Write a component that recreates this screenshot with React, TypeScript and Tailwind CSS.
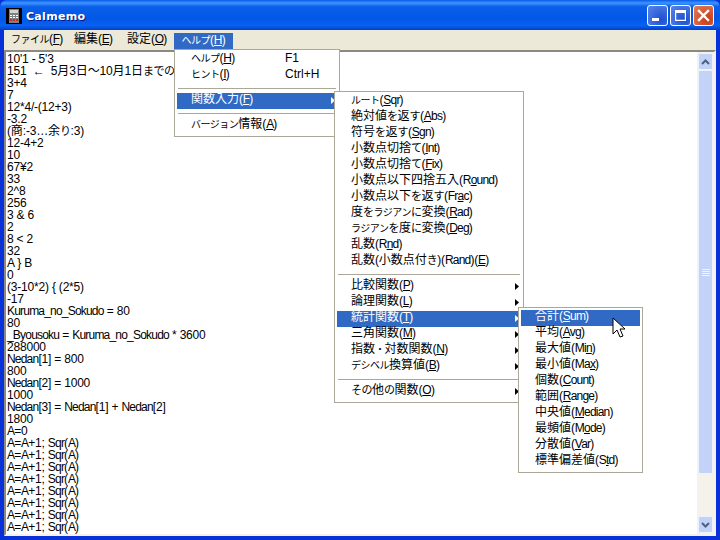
import React from "react";

const UI_FONT = "font-['Liberation_Sans','Noto_Sans_CJK_JP',sans-serif]";

const LINES = [
  "10'1 - 5'3",
  "151  ←  5月3日～10月1日までの",
  "3+4",
  "7",
  "12*4/-(12+3)",
  "-3.2",
  "(商:-3…余り:3)",
  "12-4+2",
  "10",
  "67¥2",
  "33",
  "2^8",
  "256",
  "3 & 6",
  "2",
  "8 < 2",
  "32",
  "A } B",
  "0",
  "(3-10*2) { (2*5)",
  "-17",
  "Kuruma_no_Sokudo = 80",
  "80",
  "_Byousoku = Kuruma_no_Sokudo * 3600",
  "288000",
  "Nedan[1] = 800",
  "800",
  "Nedan[2] = 1000",
  "1000",
  "Nedan[3] = Nedan[1] + Nedan[2]",
  "1800",
  "A=0",
  "A=A+1; Sqr(A)",
  "A=A+1; Sqr(A)",
  "A=A+1; Sqr(A)",
  "A=A+1; Sqr(A)",
  "A=A+1; Sqr(A)",
  "A=A+1; Sqr(A)",
  "A=A+1; Sqr(A)",
  "A=A+1; Sqr(A)",
];

type Entry =
  | { sep: true }
  | { label: string; key?: string; arrow?: boolean; active?: boolean };

const SEP: Entry = { sep: true };

const HELP_MENU: Entry[] = [
  { label: "ヘルプ(&H)", key: "F1" },
  { label: "ヒント(&I)", key: "Ctrl+H" },
  SEP,
  { label: "関数入力(&F)", arrow: true, active: true },
  SEP,
  { label: "バージョン情報(&A)" },
];

const FUNC_MENU: Entry[] = [
  { label: "ルート(&Sqr)" },
  { label: "絶対値を返す(&Abs)" },
  { label: "符号を返す(&Sgn)" },
  { label: "小数点切捨て(&Int)" },
  { label: "小数点切捨て(&Fix)" },
  { label: "小数点以下四捨五入(R&ound)" },
  { label: "小数点以下を返す(Fr&ac)" },
  { label: "度をラジアンに変換(&Rad)" },
  { label: "ラジアンを度に変換(&Deg)" },
  { label: "乱数(R&nd)" },
  { label: "乱数(小数点付き)(Rand)(&E)" },
  SEP,
  { label: "比較関数(&P)", arrow: true },
  { label: "論理関数(&L)", arrow: true },
  { label: "統計関数(&T)", arrow: true, active: true },
  { label: "三角関数(&M)", arrow: true },
  { label: "指数・対数関数(&N)", arrow: true },
  { label: "デシベル換算値(&B)", arrow: true },
  SEP,
  { label: "その他の関数(&O)", arrow: true },
];

const STAT_MENU: Entry[] = [
  { label: "合計(&Sum)", active: true },
  { label: "平均(&Avg)" },
  { label: "最大値(Mi&n)" },
  { label: "最小値(Ma&x)" },
  { label: "個数(&Count)" },
  { label: "範囲(&Range)" },
  { label: "中央値(&Median)" },
  { label: "最頻値(M&ode)" },
  { label: "分散値(&Var)" },
  { label: "標準偏差値(S&td)" },
];

// the bitmap UI font has narrow kana and latin, so squeeze those runs
function Squeezed({ text }: { text: string }) {
  const runs = text.match(/[ァ-ヿ]+|[ぁ-ゟ]+|[A-Za-z_]+|[一-龠]+|[^ァ-ヿぁ-ゟA-Za-z_一-龠]+/g) ?? [];
  return (
    <>
      {runs.map((run, i) => {
        let cls = "tracking-[-0.2px]";
        if (/[ァ-ヿ]/.test(run)) cls = "text-[10px] tracking-[-0.5px]";
        else if (/[ぁ-ゟ]/.test(run)) cls = "text-[11px] tracking-[-0.5px]";
        else if (/[A-Za-z_]/.test(run)) cls = "tracking-[-0.8px]";
        else if (/[一-龠]/.test(run)) cls = "";
        return (
          <span key={i} className={cls}>
            {run}
          </span>
        );
      })}
    </>
  );
}

function Mnemonic({ text }: { text: string }) {
  const i = text.indexOf("&");
  if (i < 0) return <Squeezed text={text} />;
  return (
    <>
      <Squeezed text={text.slice(0, i)} />
      <u>
        <Squeezed text={text[i + 1]} />
      </u>
      <Squeezed text={text.slice(i + 2)} />
    </>
  );
}

function MenuPanel({ items, className }: { items: Entry[]; className: string }) {
  return (
    <div
      className={`absolute flex flex-col border border-[#aca899] bg-white px-[2px] py-[2px] text-[12px] text-black ${UI_FONT} ${className}`}
    >
      {items.map((item, i) =>
        "sep" in item ? (
          <div key={i} className="mx-[1px] my-[4px] h-[1px] bg-[#aca899]" />
        ) : (
          <div
            key={i}
            className={`flex h-[16px] items-center pb-[3px] pl-[14px] leading-[13px] whitespace-nowrap ${
              item.active ? "bg-[#316ac5] text-white" : ""
            }`}
          >
            <span className="flex-1">
              <Mnemonic text={item.label} />
            </span>
            {item.key && <span className="w-[52px]">{item.key}</span>}
            {item.arrow && (
              <svg width="4" height="7" viewBox="0 0 4 7" className="mt-[2px] mr-[2px]">
                <path d="M0 0L4 3.5L0 7Z" fill={item.active ? "#fff" : "#000"} />
              </svg>
            )}
          </div>
        )
      )}
    </div>
  );
}

function CalcIcon() {
  return (
    <svg width="16" height="16" viewBox="0 0 16 16" className="mt-[1px] shrink-0">
      <rect width="16" height="16" fill="#000" />
      <rect x="3" y="1" width="10" height="14" fill="#808080" />
      <rect x="4" y="2" width="8" height="3" fill="#d4d4d4" />
      <path d="M4 7h2v1H4zM7 7h2v1H7zM10 7h2v1h-2zM4 9h2v1H4zM7 9h2v1H7zM10 9h2v1h-2z" fill="#fff" />
      <path d="M4 11h2v2H4zM7 11h2v2H7zM10 11h2v2h-2z" fill="#e02020" />
    </svg>
  );
}

function CaptionButton({ kind }: { kind: "min" | "max" | "close" }) {
  const bg =
    kind === "close"
      ? "bg-[radial-gradient(circle_at_70%_70%,#c53a14,#e4805f)]"
      : "bg-[radial-gradient(circle_at_70%_70%,#1d4fd0,#5a86ea)]";
  return (
    <div className={`flex h-[21px] w-[21px] items-center justify-center rounded-[3px] border border-white ${bg}`}>
      <svg width="19" height="19" viewBox="0 0 19 19">
        {kind === "min" && <rect x="4" y="12" width="7" height="3" fill="#fff" />}
        {kind === "max" && (
          <path d="M4 4h11v11H4zM5.2 7v6.8h8.6V7z" fill="#fff" fillRule="evenodd" />
        )}
        {kind === "close" && (
          <path d="M5 5L14 14M14 5L5 14" stroke="#fff" strokeWidth="2.4" strokeLinecap="square" />
        )}
      </svg>
    </div>
  );
}

function ScrollButton({ down }: { down?: boolean }) {
  return (
    <div className="flex h-[17px] w-[15px] items-center justify-center rounded-[2px] border border-[#eef2fd] bg-[#c3d3f8]">
      <svg width="9" height="6" viewBox="0 0 9 6">
        <path
          d={down ? "M1 1L4.5 4.5L8 1" : "M1 5L4.5 1.5L8 5"}
          fill="none"
          stroke="#4d6185"
          strokeWidth="2"
        />
      </svg>
    </div>
  );
}

function Scrollbar() {
  return (
    <div className="flex w-[17px] shrink-0 flex-col items-center bg-[#f4f2ea] pt-[1px] pb-[1px]">
      <ScrollButton />
      <div className="flex h-[404px] w-[15px] items-center justify-center rounded-[2px] border border-[#eef2fd] bg-[#c3d3f8]">
        <div className="flex w-[8px] flex-col gap-[1px]">
          <div className="h-[1px] bg-[#eef4fe]" />
          <div className="h-[1px] bg-[#eef4fe]" />
          <div className="h-[1px] bg-[#eef4fe]" />
          <div className="h-[1px] bg-[#eef4fe]" />
        </div>
      </div>
      <div className="flex-1" />
      <ScrollButton down />
    </div>
  );
}

export default function App() {
  return (
    <div className={`relative flex h-[540px] w-[720px] flex-col overflow-hidden bg-[#0831d9] ${UI_FONT}`}>
      <div className="flex h-[30px] shrink-0 items-center rounded-t-[7px] bg-[linear-gradient(180deg,#0a5ae8_0%,#3d95ff_10%,#0c5fe8_22%,#0058e6_60%,#0a60f0_85%,#0040c8_100%)] pr-[6px] pl-[6px]">
        <CalcIcon />
        <span className="mt-[5px] ml-[4px] flex-1 font-['DejaVu_Sans',sans-serif] text-[11px] font-bold tracking-[0.3px] text-white [text-shadow:1px_1px_#0f1089]">
          Calmemo
        </span>
        <div className="flex gap-[2px]">
          <CaptionButton kind="min" />
          <CaptionButton kind="max" />
          <CaptionButton kind="close" />
        </div>
      </div>
      <div className="mx-[4px] mb-[4px] flex min-h-0 flex-1 flex-col bg-[#ece9d8]">
        <div className="flex h-[20px] shrink-0 text-[12px] whitespace-nowrap text-black">
          <div className="flex w-[67px] items-center pb-[3px] pl-[7px]">
            <span><Mnemonic text="ファイル(&F)" /></span>
          </div>
          <div className="flex w-[53px] items-center pb-[3px] pl-[3px]">
            <span><Mnemonic text="編集(&E)" /></span>
          </div>
          <div className="flex w-[50px] items-center pb-[3px] pl-[3px]">
            <span><Mnemonic text="設定(&O)" /></span>
          </div>
          <div className="mt-[3px] flex h-[16px] w-[59px] items-center justify-center bg-[#316ac5] pb-[3px] text-white">
            <span><Mnemonic text="ヘルプ(&H)" /></span>
          </div>
        </div>
        <div className="flex min-h-0 flex-1 border-t-2 border-r-2 border-b-2 border-l-2 border-t-[#8c8a80] border-r-[#f4f2ea] border-b-[#f4f2ea] border-l-[#8c8a80]">
          <div className="min-w-0 flex-1 overflow-hidden bg-white pt-[1px] pl-[1px] text-[12px] leading-[12px] whitespace-pre text-black">
            {LINES.map((line, i) => (
              <div key={i} className="h-[12px]">
                <Squeezed text={line} />
              </div>
            ))}
          </div>
          <Scrollbar />
        </div>
      </div>

      <MenuPanel items={HELP_MENU} className="top-[49px] left-[174px] w-[166px]" />
      <MenuPanel items={FUNC_MENU} className="top-[91px] left-[334px] w-[190px]" />
      <MenuPanel items={STAT_MENU} className="top-[307px] left-[518px] w-[125px]" />

      {/* mouse pointer */}
      <svg width="14" height="22" viewBox="0 0 14 22" className="absolute top-[317px] left-[612px]">
        <path d="M1 1V17L5 13L8 20L11 19L8 12H13Z" fill="#fff" stroke="#000" strokeWidth="1" />
      </svg>
    </div>
  );
}
